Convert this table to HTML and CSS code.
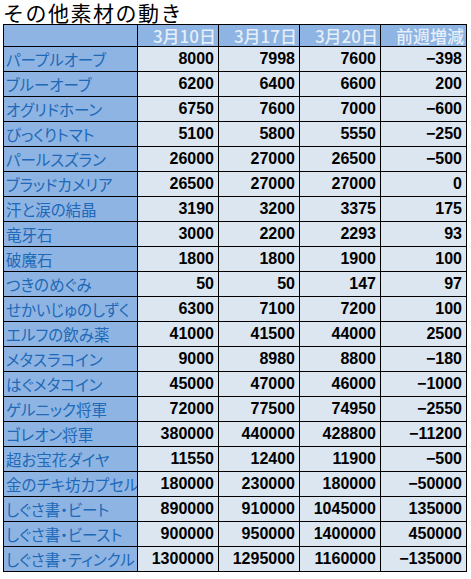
FILE: index.html
```html
<!DOCTYPE html>
<html lang="ja">
<head>
  <meta charset="UTF-8">
  <title>その他素材の動き</title>
  <link rel="stylesheet" href="styles.css">
</head>
<body>
  <h1 class="title">その他素材の動き</h1>

  <table class="prices">
    <colgroup>
      <col class="col-name">
      <col class="col-num">
      <col class="col-num">
      <col class="col-num">
      <col class="col-diff">
    </colgroup>
    <thead>
      <tr>
        <th></th>
        <th>3月10日</th>
        <th>3月17日</th>
        <th>3月20日</th>
        <th>前週増減</th>
      </tr>
    </thead>
    <tbody>
      <tr><th>パープルオーブ</th><td>8000</td><td>7998</td><td>7600</td><td>−398</td></tr>
      <tr><th>ブルーオーブ</th><td>6200</td><td>6400</td><td>6600</td><td>200</td></tr>
      <tr><th>オグリドホーン</th><td>6750</td><td>7600</td><td>7000</td><td>−600</td></tr>
      <tr><th>びっくりトマト</th><td>5100</td><td>5800</td><td>5550</td><td>−250</td></tr>
      <tr><th>パールスズラン</th><td>26000</td><td>27000</td><td>26500</td><td>−500</td></tr>
      <tr><th>ブラッドカメリア</th><td>26500</td><td>27000</td><td>27000</td><td>0</td></tr>
      <tr><th>汗と涙の結晶</th><td>3190</td><td>3200</td><td>3375</td><td>175</td></tr>
      <tr><th>竜牙石</th><td>3000</td><td>2200</td><td>2293</td><td>93</td></tr>
      <tr><th>破魔石</th><td>1800</td><td>1800</td><td>1900</td><td>100</td></tr>
      <tr><th>つきのめぐみ</th><td>50</td><td>50</td><td>147</td><td>97</td></tr>
      <tr><th>せかいじゅのしずく</th><td>6300</td><td>7100</td><td>7200</td><td>100</td></tr>
      <tr><th>エルフの飲み薬</th><td>41000</td><td>41500</td><td>44000</td><td>2500</td></tr>
      <tr><th>メタスラコイン</th><td>9000</td><td>8980</td><td>8800</td><td>−180</td></tr>
      <tr><th>はぐメタコイン</th><td>45000</td><td>47000</td><td>46000</td><td>−1000</td></tr>
      <tr><th>ゲルニック将軍</th><td>72000</td><td>77500</td><td>74950</td><td>−2550</td></tr>
      <tr><th>ゴレオン将軍</th><td>380000</td><td>440000</td><td>428800</td><td>−11200</td></tr>
      <tr><th>超お宝花ダイヤ</th><td>11550</td><td>12400</td><td>11900</td><td>−500</td></tr>
      <tr><th>金のチキ坊カプセル</th><td>180000</td><td>230000</td><td>180000</td><td>−50000</td></tr>
      <tr><th>しぐさ書・ビート</th><td>890000</td><td>910000</td><td>1045000</td><td>135000</td></tr>
      <tr><th>しぐさ書・ビースト</th><td>900000</td><td>950000</td><td>1400000</td><td>450000</td></tr>
      <tr><th>しぐさ書・ティンクル</th><td>1300000</td><td>1295000</td><td>1160000</td><td>−135000</td></tr>
    </tbody>
  </table>
</body>
</html>
```

FILE: styles.css
```css
body {
  margin: 0;
  padding: 0 3px;
  background: #fff;
  font-family: "Noto Sans CJK JP", "Noto Sans", sans-serif;
}
.title {
  margin: 0;
  height: 24px;
  font-size: 21px;
  font-weight: normal;
  line-height: 24px;
  letter-spacing: 1.5px;
  color: #000;
}
/* Price table */
.prices {
  border-collapse: collapse;
  table-layout: fixed;
  width: 463px;
}
.col-name { width: 134px; }
.col-num { width: 81px; }
.col-diff { width: 86px; }
.prices th,
.prices td {
  border: 1px solid #000;
  padding: 0 3px 0 0;
  height: 24px;
  white-space: nowrap;
  overflow: hidden;
}
.prices thead th {
  height: 21px;
  background: #8db4e2;
  color: #e6eef8;
  font-size: 17px;
  font-weight: 500;
  text-align: right;
  line-height: 21px;
  padding-right: 2px;
}
.prices tbody th {
  background: #8db4e2;
  color: #2068b8;
  font-size: 15.5px;
  font-weight: normal;
  text-align: left;
  padding-left: 2px;
  font-feature-settings: "palt";
}
.prices td {
  background: #dce6f1;
  color: #000;
  font-family: "Liberation Sans", Arial, sans-serif;
  font-size: 16px;
  font-weight: bold;
  text-align: right;
  padding-right: 4px;
}
```
